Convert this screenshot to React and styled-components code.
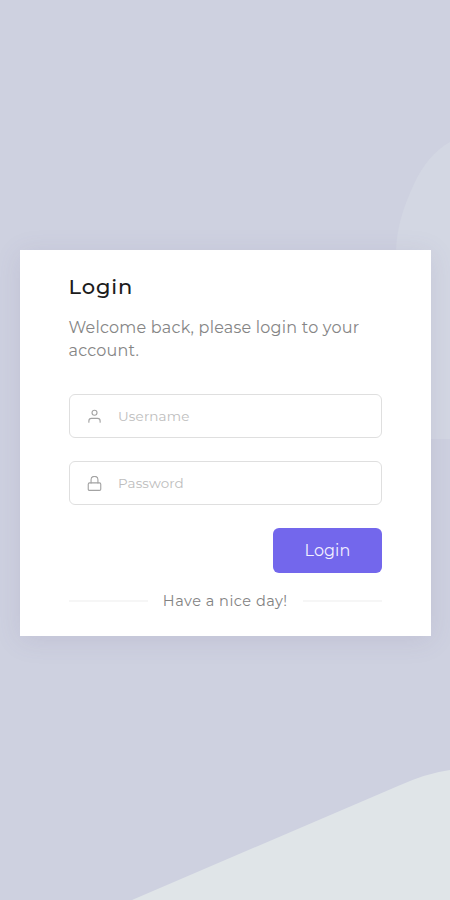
import React, { useState } from "react";
import styled, { createGlobalStyle } from "styled-components";

function Field({ icon, type, placeholder, spacing }) {
  const [value, setValue] = useState("");

  return (
    <FieldWrap>
      {icon}
      <Input
        type={type}
        placeholder={placeholder}
        $spacing={spacing}
        value={value}
        onChange={(e) => setValue(e.target.value)}
      />
    </FieldWrap>
  );
}

function UserIcon() {
  return (
    <Icon viewBox="0 0 24 24">
      <path d="M21 21v-2a4 4 0 0 0-4-4H7a4 4 0 0 0-4 4v2" />
      <circle cx="12" cy="6" r="4" />
    </Icon>
  );
}

function LockIcon() {
  return (
    <Icon viewBox="0 0 24 24">
      <rect x="2" y="11" width="20" height="12" rx="2" />
      <path d="M6.5 11V6a5.5 5.5 0 0 1 11 0v5" />
    </Icon>
  );
}

function App() {
  return (
    <>
      <GlobalStyle />
      <Page>
        <Backdrop viewBox="0 0 450 900" preserveAspectRatio="none">
          <path fill="#d3d7e3" d="M450 142C434 151 423 165 414 184C403 208 397 227 396 250C392 315 405 405 430 439H450Z" />
          <path fill="#e0e5e8" d="M132 900L398 786Q427 773 450 770V900Z" />
        </Backdrop>
        <Card>
          <Title>Login</Title>
          <Welcome>
            Welcome back, please login to your account.
          </Welcome>
          <Form onSubmit={(e) => e.preventDefault()}>
            <Field icon={<UserIcon />} type="text" placeholder="Username" spacing="0.15px" />
            <Field icon={<LockIcon />} type="password" placeholder="Password" spacing="0.1px" />
            <LoginButton type="submit">Login</LoginButton>
          </Form>
          <Divider>
            <span>Have a nice day!</span>
          </Divider>
        </Card>
      </Page>
    </>
  );
}

export default App;

const GlobalStyle = createGlobalStyle`
  * {
    box-sizing: border-box;
  }

  body {
    margin: 0;
    font-family: Montserrat, Inter, sans-serif;
  }
`;

const Page = styled.main`
  display: flex;
  justify-content: center;
  align-items: flex-start;
  position: relative;
  height: 900px;
  padding-top: 250px;
  padding-left: 1px;
  overflow: hidden;
  background-color: #ced1e0;
`;

const Backdrop = styled.svg`
  position: absolute;
  top: 0;
  left: 0;
  width: 100%;
  height: 100%;
`;

const Card = styled.section`
  position: relative;
  width: 411px;
  height: 386px;
  padding: 22px 49px 0 48.5px;
  background-color: #fff;
  box-shadow: 0 4px 25px rgba(100, 80, 130, 0.12);
`;

const Title = styled.h1`
  margin: 0;
  font-size: 21px;
  font-weight: 500;
  line-height: 30px;
  letter-spacing: 0.9px;
  color: #1c1c1c;
`;

const Welcome = styled.p`
  margin: 14px 0 0;
  font-size: 16px;
  font-weight: 400;
  line-height: 23px;
  letter-spacing: 0.22px;
  color: #858585;
`;

const Form = styled.form`
  display: flex;
  flex-direction: column;
  gap: 23px;
  margin-top: 32px;
`;

const FieldWrap = styled.label`
  display: flex;
  align-items: center;
  height: 44px;
  padding: 0 17px;
  border: 1.5px solid #dfdfdf;
  border-radius: 6px;
`;

const Icon = styled.svg`
  flex: none;
  width: 15px;
  height: 15px;
  margin-right: 16.5px;
  fill: none;
  stroke: #a3a3a3;
  stroke-width: 1.8;
  stroke-linecap: round;
  stroke-linejoin: round;
`;

const Input = styled.input`
  flex: 1;
  min-width: 0;
  padding: 0;
  border: 0;
  outline: none;
  background: transparent;
  font-family: inherit;
  font-size: 13.5px;
  letter-spacing: ${({ $spacing }) => $spacing};
  color: #777;

  &::placeholder {
    color: #bdbdbd;
    opacity: 1;
  }
`;

const LoginButton = styled.button`
  align-self: flex-end;
  width: 109px;
  height: 45px;
  padding: 0;
  border: 0;
  border-radius: 6px;
  background-color: #7367ec;
  font-family: inherit;
  font-size: 16px;
  letter-spacing: 0.1px;
  color: #f2f0ff;
  cursor: pointer;
`;

const Divider = styled.div`
  display: flex;
  align-items: center;
  gap: 15px;
  margin-top: 17px;
  font-size: 14.5px;
  line-height: 22px;
  letter-spacing: 0.5px;
  color: #828282;
  white-space: nowrap;

  &::before,
  &::after {
    content: "";
    flex: 1;
    height: 2px;
    background-color: #f6f6f6;
  }
`;
